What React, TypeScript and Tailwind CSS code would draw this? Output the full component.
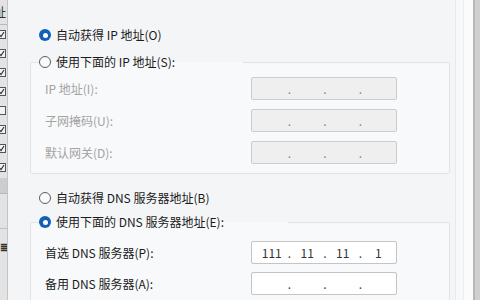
import React from 'react';

const FONT = '"Noto Sans CJK SC", "Noto Sans", sans-serif';

const Radio: React.FC<{ checked?: boolean }> = ({ checked }) =>
  checked ? (
    <span className="flex h-[12px] w-[12px] shrink-0 items-center justify-center rounded-full bg-[#0f62b6]">
      <span className="h-[5px] w-[5px] rounded-full bg-white" />
    </span>
  ) : (
    <span className="h-[12px] w-[12px] shrink-0 rounded-full border border-[#5c5c5c] bg-[#fbfbfb]" />
  );

const RadioRow: React.FC<{ checked?: boolean; label: string }> = ({ checked, label }) => (
  <div className="flex h-[20px] items-center gap-[5px] text-[12px] text-[#1b1b1b]">
    <Radio checked={checked} />
    <span>{label}</span>
  </div>
);

const IpBox: React.FC<{ parts?: string[]; disabled?: boolean }> = ({ parts = ['', '', '', ''], disabled }) => (
  <div
    className={
      'flex h-[23px] w-[146px] items-center rounded-[2px] border pl-[2px] text-[12px] text-[#333] ' +
      (disabled ? 'border-[#cdcdcd] bg-[#efefef]' : 'border-[#c4c4c4] bg-white')
    }
  >
    {parts.map((p, i) => (
      <React.Fragment key={i}>
        {i > 0 && (
          <span className={'flex w-0 justify-center ' + (disabled ? 'text-[#8a8a8a]' : 'text-[#444]')}>.</span>
        )}
        <span className="w-[36px] text-center">{p}</span>
      </React.Fragment>
    ))}
  </div>
);

const FieldRow: React.FC<{ label: string; disabled?: boolean; parts?: string[] }> = ({ label, disabled, parts }) => (
  <div className="flex h-[23px] items-center">
    <span className={'w-[206px] text-[12px] ' + (disabled ? 'text-[#a3a3a3]' : 'text-[#1b1b1b]')}>{label}</span>
    <IpBox disabled={disabled} parts={parts} />
  </div>
);

const CheckMark: React.FC<{ on?: boolean }> = ({ on = true }) => (
  <div className="flex h-[19px] items-center">
    <span className="-ml-[3px] flex h-[9px] w-[9px] items-center justify-center border border-[#555] bg-[#f2f2f2]">
      {on && (
        <svg width="7" height="7" viewBox="0 0 7 7">
          <path d="M1 3.5 L3 5.5 L6 1" fill="none" stroke="#333" strokeWidth="1.2" />
        </svg>
      )}
    </span>
  </div>
);

export default function App() {
  return (
    <div className="flex h-[300px] w-[480px] overflow-hidden bg-[#f4f5f7]" style={{ fontFamily: FONT }}>
      {/* window behind, left edge */}
      <div className="flex w-[8px] shrink-0 flex-col overflow-hidden border-r border-[#c4c4c4] bg-[#e3e3e3]">
        <div className="flex h-[25px] items-center border-b border-[#b9b9b9] text-[12px] text-[#333]">
          <span className="-ml-[6px]">址</span>
        </div>
        {[true, true, true, true, false, true, true, true].map((on, i) => (
          <CheckMark key={i} on={on} />
        ))}
        <div className="mt-[1px] h-[16px] border-b border-[#b7b7b7] bg-[#cdcdcd]" />
        <div className="h-[35px] border-b border-[#c0c0c0]" />
        <div className="mt-[10px] flex justify-center text-[10px] font-bold text-[#333]">≣</div>
      </div>

      {/* dialog content */}
      <div className="flex flex-1 flex-col pl-[22px] pt-[25px]">
        <div className="pl-[9px]">
          <RadioRow checked label="自动获得 IP 地址(O)" />
        </div>

        <fieldset className="mt-[7px] w-[420px] rounded-[2px] border border-[#e2e3e5] bg-[#f8f9fa] pb-[9px] pl-[8px]">
          <legend className="w-[204px]">
            <RadioRow label="使用下面的 IP 地址(S):" />
          </legend>
          <div className="flex flex-col gap-[9px] pl-[6px] pt-[5px]">
            <FieldRow disabled label="IP 地址(I):" />
            <FieldRow disabled label="子网掩码(U):" />
            <FieldRow disabled label="默认网关(D):" />
          </div>
        </fieldset>

        <div className="mt-[14px] pl-[9px]">
          <RadioRow label="自动获得 DNS 服务器地址(B)" />
        </div>

        <fieldset className="mt-[4px] w-[420px] rounded-[2px] border border-[#e2e3e5] bg-[#f8f9fa] pb-[9px] pl-[8px]">
          <legend className="w-[249px]">
            <RadioRow checked label="使用下面的 DNS 服务器地址(E):" />
          </legend>
          <div className="flex flex-col gap-[8px] pl-[6px] pt-[9px]">
            <FieldRow label="首选 DNS 服务器(P):" parts={['111', '11', '11', '1']} />
            <FieldRow label="备用 DNS 服务器(A):" />
          </div>
        </fieldset>
      </div>

      {/* dialog right edge and window behind */}
      <div className="w-[8px] shrink-0 border-l border-[#e8e9eb] bg-[#f7f8f9]" />
      <div className="w-[10px] shrink-0 border-l border-[#eceded] bg-[#fbfbfb]" />
      <div className="w-[7px] shrink-0 border-l-2 border-[#b8b8b8] bg-[#d0d0d0]" />
    </div>
  );
}
